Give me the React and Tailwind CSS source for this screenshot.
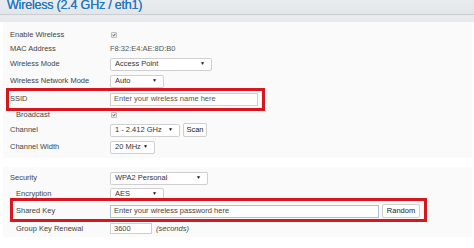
import React from 'react';

const font = "font-['Liberation_Sans',Arial,sans-serif]";

function Select({ w, value }) {
  return (
    <div className={`${w} h-[13px] flex items-center justify-between bg-white border border-[#cfcfcf] rounded-[2px] pl-[4px] pr-[6px] text-[7.5px] text-[#333]`}>
      <span>{value}</span>
      <span className="text-[5px] text-[#111]">▼</span>
    </div>
  );
}

function Check() {
  return (
    <span className="w-[6px] h-[6px] ml-[1px] flex items-center justify-center bg-[#f2f2f2] border border-[#bdbdbd] rounded-[1px]">
      <svg viewBox="0 0 8 8" className="w-[6px] h-[6px]">
        <path d="M1.3 4.2 L3.2 6 L6.8 1.6" fill="none" stroke="#222" strokeWidth="1.6" />
      </svg>
    </span>
  );
}

function Row({ label, h, indent, children }) {
  return (
    <div className={`relative flex items-center ${h}`}>
      <div className={`w-[107px] shrink-0 text-[7.5px] text-[#444] ${indent ? 'pl-[13px]' : 'pl-[7px]'}`}>{label}</div>
      <div className="flex items-center gap-[3px]">{children}</div>
    </div>
  );
}

export default function App() {
  return (
    <div className={`w-[474px] h-[248px] bg-white overflow-hidden ${font}`}>
      <header className="h-[22px]">
        <div className="h-[15px] bg-gradient-to-b from-[#e9ecee] to-[#e2e6e9] border-b border-[#c9ced3] pl-[7px] overflow-hidden">
          <h1 className="text-[12.5px] leading-[13px] -mt-[1px] text-[#2575c0] [text-shadow:0_0_0.4px_#2575c0] tracking-[-0.2px]">Wireless (2.4 GHz / eth1)</h1>
        </div>
        <div className="h-[7px] bg-[#e8ebee]" />
      </header>

      <section className="ml-[3px] w-[469px] bg-[#fafafa] pt-[6px] pb-[3px]">
        <Row label="Enable Wireless" h="h-[14px]"><Check /></Row>
        <Row label="MAC Address" h="h-[14px]">
          <span className="text-[7.5px] text-[#555]">F8:32:E4:AE:8D:B0</span>
        </Row>
        <Row label="Wireless Mode" h="h-[16px]"><Select w="w-[102px]" value="Access Point" /></Row>
        <Row label="Wireless Network Mode" h="h-[18px]"><Select w="w-[54px]" value="Auto" /></Row>
        <Row label="SSID" h="h-[18px]">
          <div className="w-[148px] h-[13px] flex items-center bg-white border border-[#cfcfcf] pl-[3px] text-[7.5px] text-[#555]">
            Enter your wireless name here
          </div>
          <span className="absolute left-[3px] top-[-2px] w-[259px] h-[23px] border-[3px] border-[#d8161f] pointer-events-none" />
        </Row>
        <Row label="Broadcast" h="h-[13px]" indent><Check /></Row>
        <Row label="Channel" h="h-[18px]">
          <Select w="w-[70px]" value="1 - 2.412 GHz" />
          <div className="h-[14px] w-[24px] flex items-center justify-center bg-white border border-[#cfcfcf] rounded-[2px] text-[7.5px] text-[#222]">Scan</div>
        </Row>
        <Row label="Channel Width" h="h-[16px]"><Select w="w-[45px]" value="20 MHz" /></Row>
      </section>

      <div className="h-[9px]" />

      <section className="ml-[3px] w-[469px] bg-[#fafafa] pt-[3px]">
        <Row label="Security" h="h-[16px]"><Select w="w-[98px]" value="WPA2 Personal" /></Row>
        <Row label="Encryption" h="h-[16px]" indent><Select w="w-[54px]" value="AES" /></Row>
        <Row label="Shared Key" h="h-[18px]" indent>
          <div className="w-[269px] h-[13px] flex items-center bg-white border border-[#a9bfdc] pl-[3px] text-[7.5px] text-[#444]">
            Enter your wireless password here
          </div>
          <div className="h-[14px] w-[38px] flex items-center justify-center bg-white border border-[#cfcfcf] rounded-[2px] text-[7.5px] text-[#222]">Random</div>
          <span className="absolute left-[7px] top-[-4px] w-[417px] h-[24px] border-[3px] border-[#d8161f] pointer-events-none" />
        </Row>
        <Row label="Group Key Renewal" h="h-[17px]" indent>
          <div className="w-[42px] h-[11px] flex items-center bg-white border border-[#cfcfcf] pl-[3px] text-[7.5px] text-[#444]">3600</div>
          <span className="ml-[1px] text-[7.5px] italic text-[#444]">(seconds)</span>
        </Row>
      </section>
    </div>
  );
}
